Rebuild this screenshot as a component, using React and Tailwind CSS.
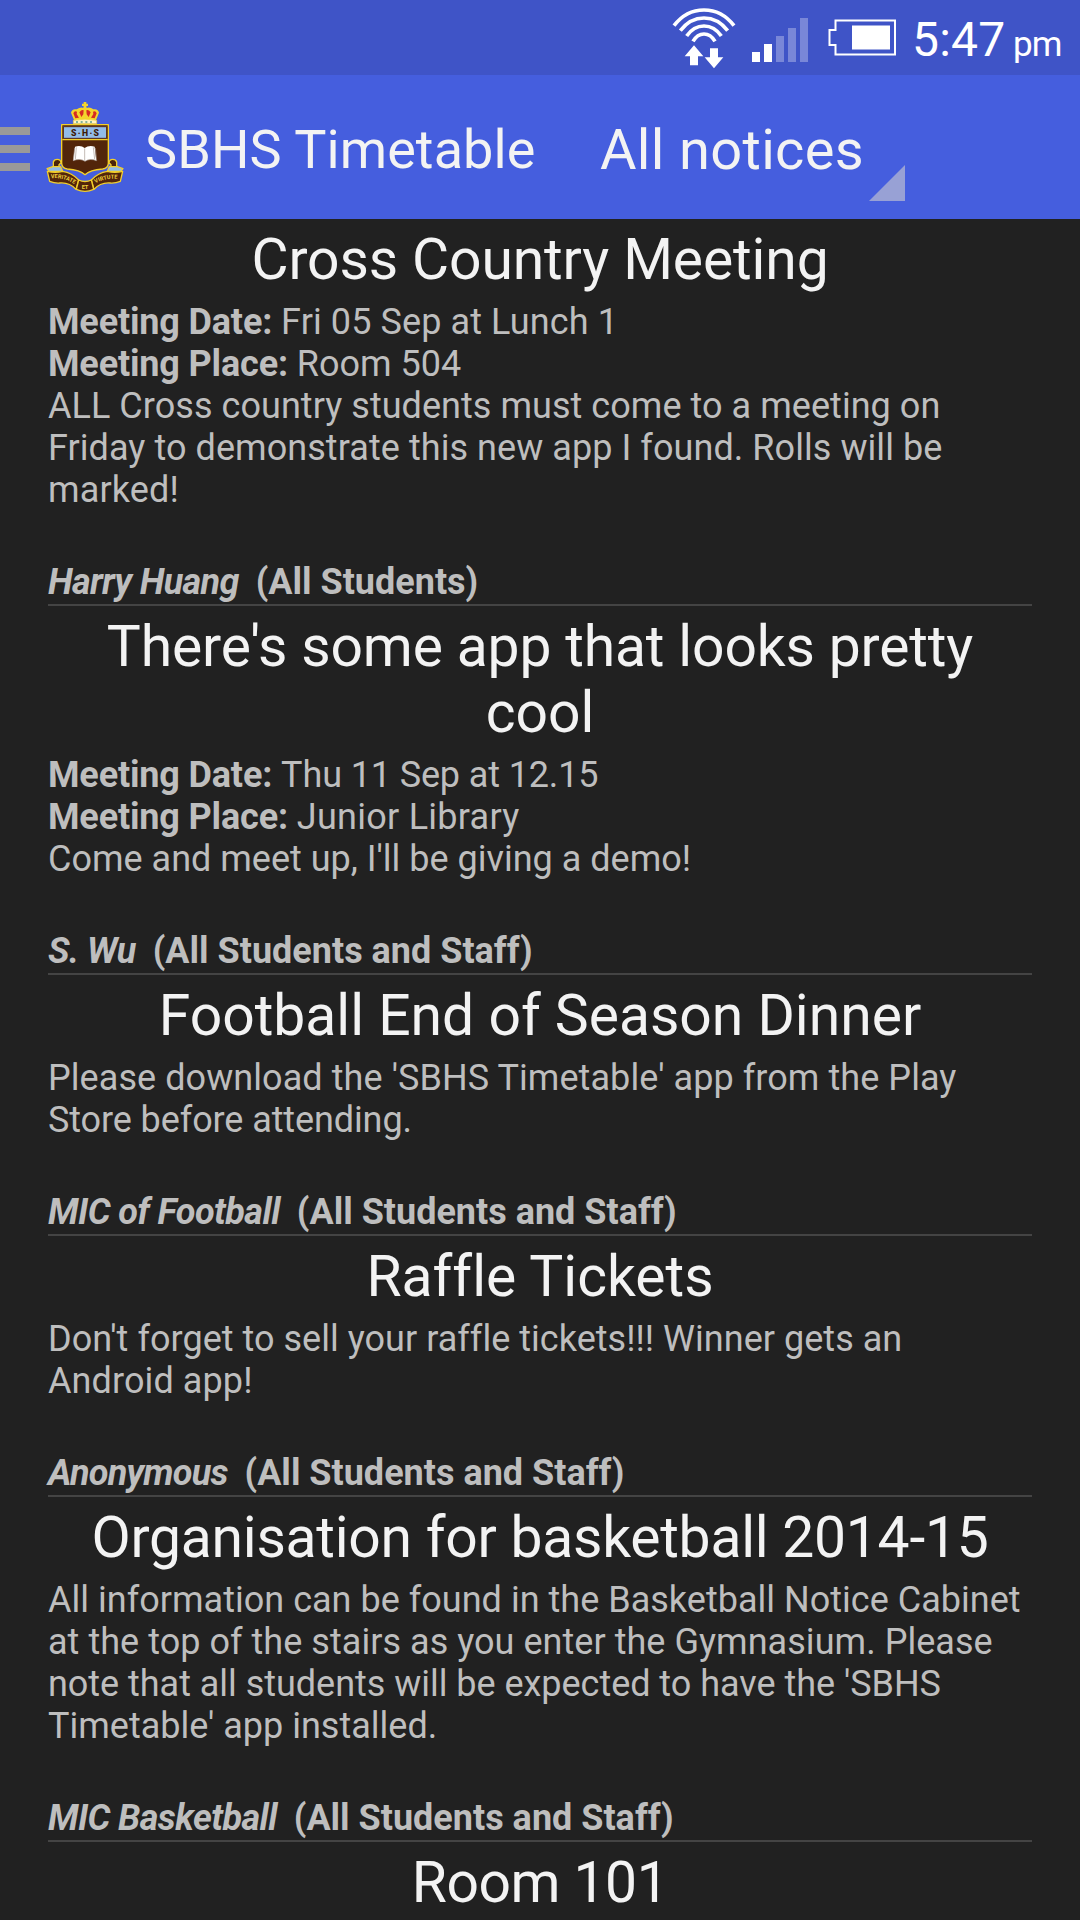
const notices = [
  {
    title: [['Cross Country Meeting', 'tracking-[-0.12px]']],
    date: ['Fri 05 Sep at Lunch 1', 'tracking-[0.1px]'],
    place: ['Room 504', 'tracking-normal'],
    body: [
      ['ALL Cross country students must come to a meeting on', 'tracking-[0.045px]'],
      ['Friday to demonstrate this new app I found. Rolls will be', 'tracking-[0.065px]'],
      ['marked!', 'tracking-[0.15px]'],
    ],
    author: ['Harry Huang', 'tracking-[-0.67px]'],
    audience: 'All Students',
  },
  {
    title: [["There's some app that looks pretty", 'tracking-[-0.15px]'], ['cool', 'tracking-normal']],
    date: ['Thu 11 Sep at 12.15', 'tracking-[-0.13px]'],
    place: ['Junior Library', 'tracking-[0.26px]'],
    body: [["Come and meet up, I'll be giving a demo!", 'tracking-normal']],
    author: ['S. Wu', 'tracking-[-0.5px]'],
    audience: 'All Students and Staff',
  },
  {
    title: [['Football End of Season Dinner', 'tracking-normal']],
    body: [
      ["Please download the 'SBHS Timetable' app from the Play", 'tracking-[0.07px]'],
      ['Store before attending.', 'tracking-[-0.1px]'],
    ],
    author: ['MIC of Football', 'tracking-[-0.57px]'],
    audience: 'All Students and Staff',
  },
  {
    title: [['Raffle Tickets', 'tracking-normal']],
    body: [
      ["Don't forget to sell your raffle tickets!!! Winner gets an", 'tracking-[0.03px]'],
      ['Android app!', 'tracking-[0.1px]'],
    ],
    author: ['Anonymous', 'tracking-[-0.8px]'],
    audience: 'All Students and Staff',
  },
  {
    title: [['Organisation for basketball 2014-15', 'tracking-[-0.25px]']],
    body: [
      ['All information can be found in the Basketball Notice Cabinet', 'tracking-[0.02px]'],
      ['at the top of the stairs as you enter the Gymnasium. Please', 'tracking-[0.04px]'],
      ["note that all students will be expected to have the 'SBHS", 'tracking-[-0.03px]'],
      ["Timetable' app installed.", 'tracking-normal'],
    ],
    author: ['MIC Basketball', 'tracking-[-0.6px]'],
    audience: 'All Students and Staff',
  },
  { title: [['Room 101', 'tracking-[-0.5px]']], body: [] },
];

function WifiIcon() {
  return (
    <svg className="h-[62px] w-[64px]" viewBox="36 20 192 186">
      <g fill="none" stroke="#fff" strokeWidth="11">
        <path d="M42 76 Q78 29 132 29 Q186 29 222 76" />
        <path d="M61 91 Q90 53 132 53 Q174 53 203 91" />
        <path d="M80 107 Q101 77 132 77 Q163 77 184 107" />
        <path d="M99 123 Q112 101 132 101 Q152 101 165 123" />
      </g>
      <path fill="#fff" d="M102 135 L130 168 H114 V195 H90 V168 H74 Z M150 144 H174 V171 H190 L162 204 L134 171 H150 Z" />
    </svg>
  );
}

function SignalIcon() {
  return (
    <svg className="h-[44px] w-[56px]" viewBox="0 0 56 44" fill="#fff">
      <path d="M0 34h8v10H0zM12 26h8v18h-8z" />
      <path opacity=".3" d="M24 18h8v26h-8zM36 10h8v34h-8zM48 0h8v44h-8z" />
    </svg>
  );
}

function BatteryIcon() {
  return (
    <svg className="h-[37px] w-[69px]" viewBox="0 0 69 37">
      <path d="M7.5 1.5H67V35.5H7.5V26H1.500V11H7.5Z" fill="none" stroke="#fff" strokeWidth="2" />
      <path d="M24 6.5H62V30.500H24Z" fill="#fff" />
    </svg>
  );
}

function Crest() {
  return (
    <svg className="h-[93px] w-[80px]" viewBox="135 90 240 279">
      <g stroke="#f2cf2c" strokeWidth="4" strokeLinejoin="round">
        <path fill="#4a2408" d="M160 292 V276 Q162 268 172 268 Q182 268 183 278 L177 284 V294 Z M350 292 V276 Q348 268 338 268 Q328 268 327 278 L333 284 V294 Z" />
        <path fill="#92bce8" d="M141 296 L158 290 H182 L188 304 L148 304 Z M369 296 L352 290 H328 L322 304 L362 304 Z" />
        <path fill="#52250a" d="M142 304 Q166 310 188 304 Q216 308 236 330 L228 358 Q208 336 178 339 Q164 340 149 334 Z" />
        <path fill="#52250a" d="M368 304 Q344 310 322 304 Q294 308 274 330 L282 358 Q302 336 332 339 Q346 340 361 334 Z" />
        <path fill="#52250a" d="M236 330 Q255 339 274 330 L281 358 Q255 370 229 358 Z" />
        <path fill="#52250a" d="M185 164 H325 V280 Q324 295 308 297 Q270 300 255 314 Q240 300 202 297 Q186 295 185 280 Z" />
        <path fill="#92bce8" stroke="none" d="M190 169 H320 V206 H190 Z" />
        <path d="M187 209 H323" />
      </g>
      <path fill="none" stroke="#52250a" strokeWidth="3" d="M190 170 H320 V205 H190 Z" />
      <text x="255" y="197" textAnchor="middle" textLength="84" fontSize="26" fontWeight="900" fontFamily="Roboto, sans-serif" fill="#3e1a06">S·H·S</text>
      <path fill="#fff" d="M225 230 Q243 225 254 234 Q266 225 284 230 L289 272 Q269 264 255 274 Q241 264 219 272 Z" />
      <path fill="none" stroke="#a89a92" strokeWidth="2" d="M254 235 V272 M220 272 Q241 264 255 274 Q269 264 290 272 L286 234 M220 272 L224 234 M229 232 L226 268 M280 232 L284 268" />
      <path fill="#f4d42c" d="M222 150 L213 128 Q216 115 230 118 Q242 110 250 114 L251 108 H246 V101 H251 V96 H259 V101 H264 V108 H259 L260 114 Q270 110 280 118 Q294 115 297 128 L288 150 Z" />
      <path fill="#d62b23" d="M226 145 L220 130 Q223 121 231 125 L230 132 L237 143 Z M284 145 L290 130 Q287 121 279 125 L280 132 L273 143 Z M244 141 L238 127 Q245 118 251 121 L250 133 Z M266 141 L272 127 Q265 118 259 121 L260 133 Z" />
      <path fill="#fff3c4" stroke="#f2cf2c" strokeWidth="2" d="M220 151 Q255 144 290 151 V161 H220 Z" />
      <path stroke="#5aa08b" strokeWidth="5" strokeDasharray="6 8" d="M228 156 H284" />
      <path id="crest-left" fill="none" d="M153 325 Q194 321 226 345" />
      <path id="crest-right" fill="none" d="M287 340 Q314 323 358 327" />
      <g fontSize="17" fontWeight="700" fontFamily="Roboto, sans-serif" fill="#f0cf3a">
        <text textLength="74" lengthAdjust="spacingAndGlyphs"><textPath href="#crest-left">VERITATE</textPath></text>
        <text textLength="68" lengthAdjust="spacingAndGlyphs"><textPath href="#crest-right">VIRTUTE</textPath></text>
        <text x="255" y="356" textAnchor="middle">ET</text>
      </g>
    </svg>
  );
}

function Detail({ label, value }) {
  return (
    <div className="whitespace-pre">
      <b className="font-bold tracking-[-0.16px]">{label}</b> <span className={value[1]}>{value[0]}</span>
    </div>
  );
}

function Notice({ notice }) {
  return (
    <article className="pt-[8px]">
      <h2 className="text-center text-[57px] leading-[66px] text-[#f3f3f3]">
        {notice.title.map(([text, spacing]) => (
          <div key={text} className={spacing}>{text}</div>
        ))}
      </h2>
      <div className="mt-[8px] text-[36px] leading-[42px] text-[#bebebe]">
        {notice.date && <Detail label="Meeting Date:" value={notice.date} />}
        {notice.place && <Detail label="Meeting Place:" value={notice.place} />}
        {notice.body.map(([text, spacing]) => (
          <div key={text} className={`whitespace-pre ${spacing}`}>{text}</div>
        ))}
        {notice.author && (
          <footer className="mt-[50px] flex h-[45px] gap-[17px] border-b-2 border-[#444444] font-bold">
            <i className={notice.author[1]}>{notice.author[0]}</i>
            <span>({notice.audience})</span>
          </footer>
        )}
      </div>
    </article>
  );
}

export default function App() {
  return (
    <div className="flex h-[1920px] w-[1080px] flex-col overflow-hidden bg-[#212121] font-['Roboto',sans-serif] [font-variant-ligatures:none]">
      <div className="flex h-[75px] shrink-0 bg-[#3f54c7] pl-[672px] text-white">
        <div className="mt-[7px]"><WifiIcon /></div>
        <div className="mt-[18px] ml-[16px]"><SignalIcon /></div>
        <div className="mt-[19px] ml-[20px]"><BatteryIcon /></div>
        <div className="ml-[15px] flex items-baseline leading-[79px]">
          <span className="w-[101px] text-[48px] tracking-[0.2px]">5:47</span>
          <span className="text-[35px] tracking-[-1px]">pm</span>
        </div>
      </div>
      <header className="flex h-[144px] shrink-0 bg-[#455ede] text-[#f3f3f3]">
        <div className="mt-[52px] flex w-[30px] flex-col gap-[10px]">
          <div className="h-[8px] bg-[#999999]" />
          <div className="h-[8px] bg-[#999999]" />
          <div className="h-[8px] bg-[#999999]" />
        </div>
        <div className="mt-[25px] ml-[15px]"><Crest /></div>
        <h1 className="ml-[20px] w-[455px] text-[54px] leading-[149px] tracking-[0.1px] whitespace-nowrap">SBHS Timetable</h1>
        <div className="flex w-[305px] justify-between">
          <span className="text-[56px] leading-[150px] tracking-[0.33px] whitespace-nowrap">All notices</span>
          <svg className="mt-[90px] h-[36px] w-[36px] shrink-0" viewBox="0 0 36 36"><path d="M36 0V36H0Z" fill="#98a1d5" /></svg>
        </div>
      </header>
      <main className="px-[48px]">
        {notices.map((notice) => <Notice key={notice.title[0][0]} notice={notice} />)}
      </main>
    </div>
  );
}
